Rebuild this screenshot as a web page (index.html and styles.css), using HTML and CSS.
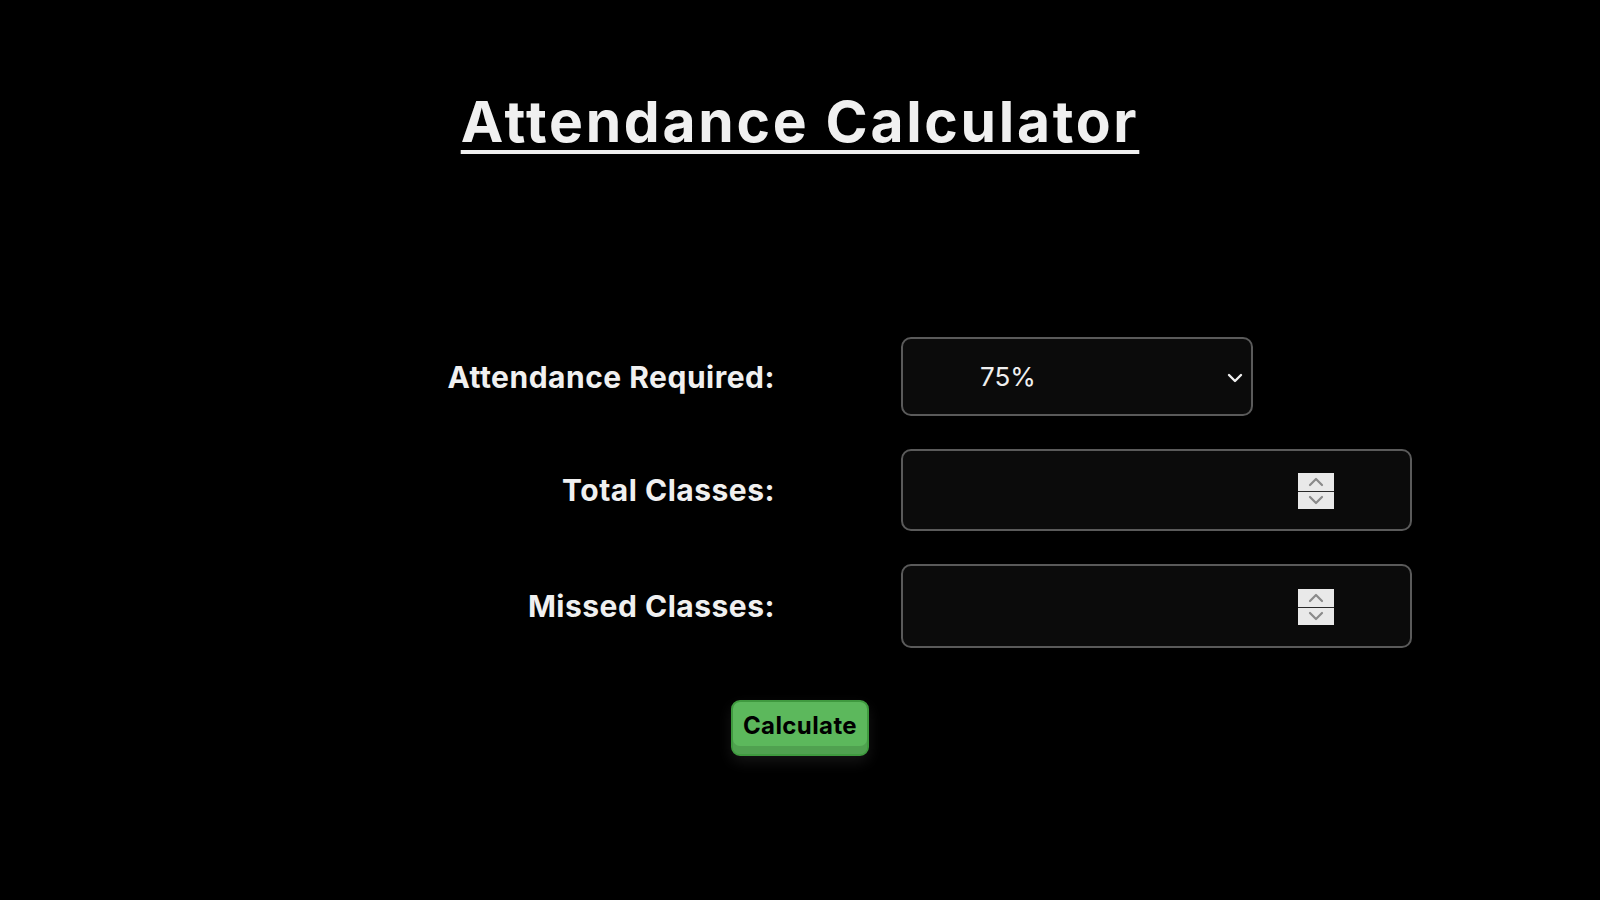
FILE: index.html
```html
<!DOCTYPE html>
<html lang="en">
<head>
<meta charset="utf-8">
<title>Attendance Calculator</title>
<link rel="stylesheet" href="styles.css">
</head>
<body>
<main class="page">
  <h1 class="title">Attendance Calculator</h1>
  <form class="form">
    <label class="label" for="req">Attendance Required:</label>
    <div class="select-wrap">
      <select id="req" class="select">
        <option>75%</option>
        <option>80%</option>
        <option>85%</option>
      </select>
      <svg class="chevron" width="16" height="10" viewBox="0 0 16 10"><path d="M2 2 L8 8 L14 2" fill="none" stroke="#f0f0f0" stroke-width="2.4" stroke-linecap="round" stroke-linejoin="round"/></svg>
    </div>
    <label class="label" for="total">Total Classes:</label>
    <div class="num-wrap">
      <input id="total" class="num" type="number">
      <div class="spin" aria-hidden="true">
        <span class="spin-half"><svg width="18" height="11" viewBox="0 0 18 11"><path d="M3 9 L9 3 L15 9" fill="none" stroke="#8a8a8a" stroke-width="2.2" stroke-linecap="round" stroke-linejoin="round"/></svg></span>
        <span class="spin-half"><svg width="18" height="11" viewBox="0 0 18 11"><path d="M3 2 L9 8 L15 2" fill="none" stroke="#8a8a8a" stroke-width="2.2" stroke-linecap="round" stroke-linejoin="round"/></svg></span>
      </div>
    </div>
    <label class="label" for="missed">Missed Classes:</label>
    <div class="num-wrap num-wrap-tall">
      <input id="missed" class="num" type="number">
      <div class="spin" aria-hidden="true">
        <span class="spin-half"><svg width="18" height="11" viewBox="0 0 18 11"><path d="M3 9 L9 3 L15 9" fill="none" stroke="#8a8a8a" stroke-width="2.2" stroke-linecap="round" stroke-linejoin="round"/></svg></span>
        <span class="spin-half"><svg width="18" height="11" viewBox="0 0 18 11"><path d="M3 2 L9 8 L15 2" fill="none" stroke="#8a8a8a" stroke-width="2.2" stroke-linecap="round" stroke-linejoin="round"/></svg></span>
      </div>
    </div>
  </form>
  <div class="actions">
    <button type="button" class="btn">Calculate</button>
  </div>
</main>
</body>
</html>
```
FILE: styles.css
```css
html, body {
  margin: 0;
  padding: 0;
  background: #000;
  color: #f0f0f0;
  font-family: Inter, "Open Sans", "Liberation Sans", sans-serif;
}
.page {
  width: 1600px;
  height: 900px;
  overflow: hidden;
}
.title {
  margin: 0;
  padding-top: 83px;
  text-align: center;
  font-family: Inter, "Open Sans", sans-serif;
  font-weight: 700;
  font-size: 57px;
  letter-spacing: 2.7px;
  line-height: 78px;
  text-decoration: underline;
  text-decoration-thickness: 4px;
  text-underline-offset: 8px;
  color: #f0f0f0;
}
.form {
  margin-top: 176px;
  display: grid;
  grid-template-columns: 775px 511px;
  column-gap: 126px;
  row-gap: 33px;
  align-items: center;
}
.label {
  text-align: right;
  font-family: Inter, "Open Sans", sans-serif;
  font-weight: 700;
  font-size: 30px;
  letter-spacing: 0.5px;
  color: #f0f0f0;
}
.select-wrap {
  position: relative;
  width: 352px;
  height: 79px;
}
.select {
  appearance: none;
  -webkit-appearance: none;
  box-sizing: border-box;
  width: 352px;
  height: 79px;
  padding: 0 0 0 77px;
  background: #0b0b0b;
  color: #f0f0f0;
  border: 2px solid #5a5a5a;
  border-radius: 10px;
  font-family: Inter, "Open Sans", sans-serif;
  font-size: 26px;
  outline: none;
}
.chevron {
  position: absolute;
  right: 10px;
  top: 36px;
  pointer-events: none;
}
.num-wrap {
  position: relative;
  width: 511px;
  height: 82px;
}
.num-wrap-tall {
  height: 84px;
}
.num {
  appearance: textfield;
  -moz-appearance: textfield;
  box-sizing: border-box;
  width: 511px;
  height: 100%;
  padding: 0 114px 0 20px;
  background: #0b0b0b;
  color: #f0f0f0;
  border: 2px solid #5a5a5a;
  border-radius: 10px;
  font-size: 26px;
  outline: none;
}
.num::-webkit-inner-spin-button,
.num::-webkit-outer-spin-button {
  -webkit-appearance: none;
  margin: 0;
}
.spin {
  position: absolute;
  right: 78px;
  top: 50%;
  margin-top: -17px;
  width: 36px;
  height: 36px;
  display: flex;
  flex-direction: column;
  gap: 1px;
  background: #2a2a2a;
  pointer-events: none;
}
.spin-half {
  flex: 1;
  display: flex;
  align-items: center;
  justify-content: center;
  background: #e9e9e9;
}
.actions {
  display: flex;
  justify-content: center;
  margin-top: 52px;
}
.btn {
  box-sizing: border-box;
  width: 138px;
  height: 56px;
  background: #5cb85c;
  border: 2px solid #3f9a3f;
  border-radius: 9px;
  box-shadow: inset 0 -8px 0 rgba(0,0,0,0.12), 0 6px 14px rgba(60,60,60,0.35);
  font-family: Inter, "Open Sans", sans-serif;
  font-weight: 700;
  font-size: 24px;
  letter-spacing: 0.4px;
  color: #000;
  padding: 0 0 6px 0;
}
```
